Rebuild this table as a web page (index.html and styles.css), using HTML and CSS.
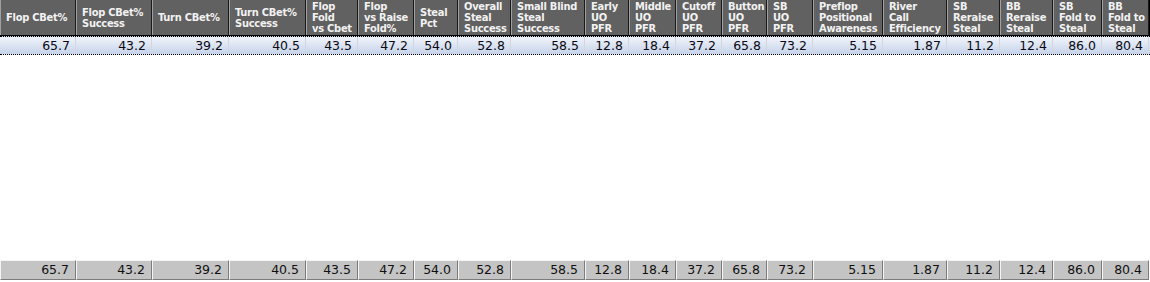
FILE: index.html
```html
<!DOCTYPE html>
<html>
<head>
<meta charset="utf-8">
<link rel="stylesheet" href="styles.css">
</head>
<body>
<div class="grid-view">
  <div class="cols head">
    <div class="hc"><span>Flop CBet%</span></div>
    <div class="hc"><span>Flop CBet%<br>Success</span></div>
    <div class="hc"><span>Turn CBet%</span></div>
    <div class="hc"><span>Turn CBet%<br>Success</span></div>
    <div class="hc"><span>Flop<br>Fold<br>vs Cbet</span></div>
    <div class="hc"><span>Flop<br>vs Raise<br>Fold%</span></div>
    <div class="hc"><span>Steal<br>Pct</span></div>
    <div class="hc"><span>Overall<br>Steal<br>Success</span></div>
    <div class="hc"><span>Small Blind<br>Steal<br>Success</span></div>
    <div class="hc"><span>Early<br>UO<br>PFR</span></div>
    <div class="hc"><span>Middle<br>UO<br>PFR</span></div>
    <div class="hc"><span>Cutoff<br>UO<br>PFR</span></div>
    <div class="hc"><span>Button<br>UO<br>PFR</span></div>
    <div class="hc"><span>SB<br>UO<br>PFR</span></div>
    <div class="hc"><span>Preflop<br>Positional<br>Awareness</span></div>
    <div class="hc"><span>River<br>Call<br>Efficiency</span></div>
    <div class="hc"><span>SB<br>Reraise<br>Steal</span></div>
    <div class="hc"><span>BB<br>Reraise<br>Steal</span></div>
    <div class="hc"><span>SB<br>Fold to<br>Steal</span></div>
    <div class="hc"><span>BB<br>Fold to<br>Steal</span></div>
  </div>
  <div class="cols row selected">
    <div class="dc">65.7</div><div class="dc">43.2</div><div class="dc">39.2</div><div class="dc">40.5</div>
    <div class="dc">43.5</div><div class="dc">47.2</div><div class="dc">54.0</div><div class="dc">52.8</div>
    <div class="dc">58.5</div><div class="dc">12.8</div><div class="dc">18.4</div><div class="dc">37.2</div>
    <div class="dc">65.8</div><div class="dc">73.2</div><div class="dc">5.15</div><div class="dc">1.87</div>
    <div class="dc">11.2</div><div class="dc">12.4</div><div class="dc">86.0</div><div class="dc">80.4</div>
  </div>
  <div class="cols foot">
    <div class="fc">65.7</div><div class="fc">43.2</div><div class="fc">39.2</div><div class="fc">40.5</div>
    <div class="fc">43.5</div><div class="fc">47.2</div><div class="fc">54.0</div><div class="fc">52.8</div>
    <div class="fc">58.5</div><div class="fc">12.8</div><div class="fc">18.4</div><div class="fc">37.2</div>
    <div class="fc">65.8</div><div class="fc">73.2</div><div class="fc">5.15</div><div class="fc">1.87</div>
    <div class="fc">11.2</div><div class="fc">12.4</div><div class="fc">86.0</div><div class="fc">80.4</div>
  </div>
</div>
</body>
</html>
```
FILE: styles.css
```css
html, body {
  margin: 0;
  padding: 0;
  background: #ffffff;
}
body {
  font-family: "DejaVu Sans Condensed", "DejaVu Sans", sans-serif;
}
.grid-view {
  display: flex;
  flex-direction: column;
  height: 282px;
  width: 1150px;
}
.cols {
  display: grid;
  grid-template-columns: 76px 76px 77px 77px 52px 56px 44px 53px 74px 44px 47px 46px 45px 46px 70px 64px 53px 53px 49px 47px;
}
.head {
  height: 36px;
  background: #000;
  border-bottom: 1px solid #000;
  box-sizing: border-box;
}
.hc {
  background: #616161;
  color: #f2f2f2;
  font-weight: bold;
  font-size: 11px;
  line-height: 11px;
  letter-spacing: -0.25px;
  border-left: 1px solid #a0a0a0;
  border-right: 1px solid #1a1a1a;
  padding-left: 5px;
  display: flex;
  align-items: center;
  white-space: nowrap;
  overflow: hidden;
}
.row {
  height: 19px;
  box-sizing: border-box;
  border-top: 1px dotted #000;
  border-bottom: 1px dotted #000;
  background: linear-gradient(#f1f4fa, #c6d3ea);
}
.dc {
  font-family: "DejaVu Sans", sans-serif;
  font-size: 12.5px;
  line-height: 17px;
  color: #0a0a14;
  text-align: right;
  padding-right: 5px;
  border-right: 1px solid #d2d6de;
}
.foot {
  margin-top: auto;
  margin-bottom: 2px;
  height: 20px;
}
.fc {
  font-family: "DejaVu Sans", sans-serif;
  background: #c4c4c4;
  font-size: 12.5px;
  line-height: 18px;
  color: #101010;
  text-align: right;
  padding-right: 6px;
  border-style: solid;
  border-width: 1px;
  border-color: #f4f4f4 #7c7c7c #7c7c7c #f4f4f4;
}
```
